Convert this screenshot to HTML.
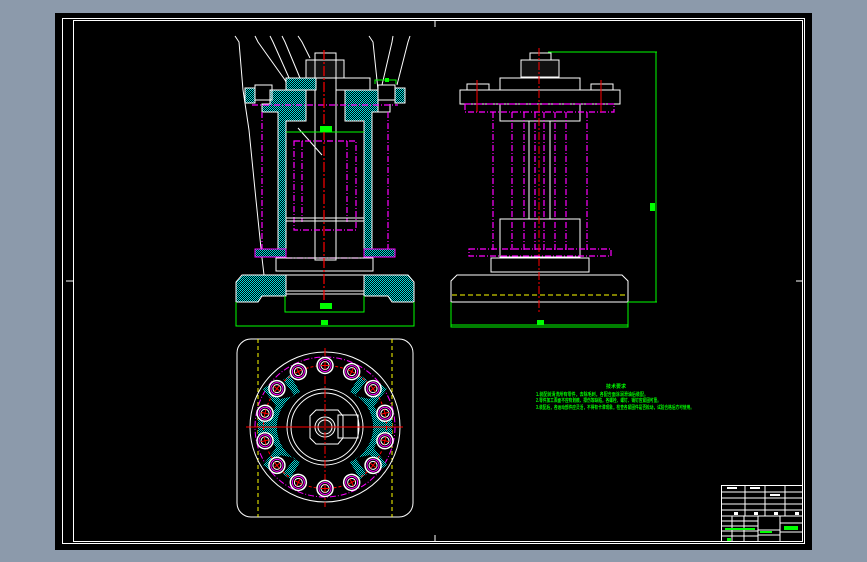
<!DOCTYPE html>
<html><head><meta charset="utf-8"><style>
html,body{margin:0;padding:0;background:#8c9aab;}
svg{display:block}
</style></head><body>
<svg width="867" height="562" viewBox="0 0 867 562" xmlns="http://www.w3.org/2000/svg">
<defs>
<pattern id="h" width="2" height="2" patternUnits="userSpaceOnUse">
<rect width="2" height="2" fill="#000"/><rect width="1" height="1" fill="#00e0e0"/><rect x="1" y="1" width="1" height="1" fill="#00e0e0"/>
</pattern>
<g id="hole"><circle r="8" fill="#000" stroke="#fff" stroke-width="1.5"/><circle r="6" fill="none" stroke="#f0f"/><circle r="4" fill="none" stroke="#fff"/><path d="M-4,0H4M0,-4V4" stroke="#f00"/></g>
</defs>
<rect x="0" y="0" width="867" height="562" fill="#8c9aab"/>
<rect x="55" y="13" width="757" height="537" fill="#000"/>
<rect x="62.5" y="18.5" width="742" height="525" fill="none" stroke="#fff" stroke-width="1"/>
<rect x="73.5" y="20.5" width="729" height="521" fill="none" stroke="#fff" stroke-width="1"/>
<g stroke="#fff" stroke-width="1">
<line x1="435" y1="20" x2="435" y2="27"/><line x1="435" y1="535" x2="435" y2="541"/>
<line x1="66" y1="281" x2="73" y2="281"/><line x1="796" y1="281" x2="802" y2="281"/>
</g>

<!-- LEFT SECTION VIEW -->
<g fill="none" stroke="#fff" stroke-width="1">
<polyline points="235,36 239,42 243,90 249,130 256,200 262,258 264,275"/>
<polyline points="255,36 258,42 285,80 300,110"/>
<polyline points="270,36 273,42 290,80 300,95"/>
<polyline points="282,36 285,42 300,78"/>
<polyline points="298,36 302,42 310,58"/>
<polyline points="369,36 373,42 378,90"/>
<polyline points="393,36 392,42 382,85"/>
<polyline points="410,36 408,42 397,85"/>
<line x1="298" y1="128" x2="322" y2="155"/>
</g>
<rect x="315" y="53" width="21" height="7" fill="#000" stroke="#fff"/>
<rect x="306" y="60" width="38" height="18" fill="#111" stroke="#fff"/>
<rect x="315" y="60" width="21" height="200" fill="none" stroke="#fff"/>
<rect x="286" y="78" width="30" height="12" fill="url(#h)" stroke="#fff"/>
<rect x="336" y="78" width="34" height="12" fill="none" stroke="#fff"/>
<path d="M270,90 H306 V121 H286 V258 H278 V112 H262 V104 H270 Z" fill="url(#h)" stroke="#fff"/>
<path d="M345,90 H378 V112 H390 V104 V112 H372 V258 H364 V121 H345 Z" fill="url(#h)" stroke="#fff"/>
<rect x="245" y="88" width="10" height="15" fill="url(#h)" stroke="#fff"/>
<rect x="255" y="85" width="17" height="15" fill="none" stroke="#fff"/>
<rect x="378" y="85" width="17" height="15" fill="none" stroke="#fff"/>
<rect x="395" y="88" width="10" height="15" fill="url(#h)" stroke="#fff"/>
<path d="M375,84 V80 H396 V84" fill="none" stroke="#0f0"/>
<rect x="385" y="78" width="4" height="4" fill="#0f0"/>
<g fill="none" stroke="#f0f" stroke-width="1.2" stroke-dasharray="6,2,1,2">
<line x1="252" y1="105" x2="398" y2="105"/>
<line x1="262" y1="112" x2="262" y2="250"/>
<line x1="388" y1="112" x2="388" y2="250"/>
<rect x="294" y="141" width="62" height="89"/>
<line x1="302" y1="141" x2="302" y2="222"/>
<line x1="347" y1="141" x2="347" y2="222"/>
<line x1="286" y1="258" x2="364" y2="258"/>
</g>
<line x1="286" y1="132" x2="364" y2="132" stroke="#0f0"/>
<rect x="255" y="249" width="31" height="8" fill="url(#h)" stroke="#f0f"/>
<rect x="364" y="249" width="31" height="8" fill="url(#h)" stroke="#f0f"/>
<rect x="286" y="218" width="78" height="3" fill="none" stroke="#fff"/>
<rect x="276" y="258" width="97" height="13" fill="none" stroke="#fff"/>
<path d="M242,275 H286 V296 H262 L258,302 H236 V282 Z" fill="url(#h)" stroke="#fff"/>
<path d="M364,275 H408 L414,282 V302 H392 L388,296 H364 Z" fill="url(#h)" stroke="#fff"/>
<line x1="286" y1="275" x2="364" y2="275" stroke="#fff"/>
<line x1="286" y1="291" x2="364" y2="291" stroke="#fff"/>
<line x1="286" y1="294" x2="364" y2="294" stroke="#fff"/>
<line x1="324" y1="50" x2="324" y2="302" stroke="#f00" stroke-width="1.2" stroke-dasharray="10,2,2,2"/>
<g stroke="#0f0" fill="none">
<path d="M285,296 V312 H364 V296"/>
<path d="M236,302 V326 H414 V302"/>
</g>
<rect x="320" y="303" width="12" height="6" fill="#0f0"/>
<rect x="321" y="320" width="7" height="5" fill="#0f0"/>
<rect x="320" y="126" width="12" height="6" fill="#0f0"/>

<!-- RIGHT VIEW -->
<g fill="none" stroke="#fff" stroke-width="1">
<rect x="530" y="53" width="21" height="7"/>
<rect x="521" y="60" width="38" height="17" fill="#111"/>
<rect x="500" y="78" width="80" height="12"/>
<rect x="460" y="90" width="160" height="14"/>
<rect x="467" y="84" width="22" height="6"/>
<rect x="591" y="84" width="22" height="6"/>
<rect x="500" y="104" width="80" height="17"/>
<rect x="529" y="121" width="21" height="98"/>
<rect x="500" y="219" width="80" height="38"/>
<rect x="491" y="258" width="98" height="14"/>
<path d="M451,302 V281 L457,275 H622 L628,281 V302 Z"/>
</g>
<g fill="none" stroke="#f0f" stroke-width="1.2" stroke-dasharray="6,2,1,2">
<rect x="465" y="104" width="149" height="8"/>
<line x1="493" y1="112" x2="493" y2="250"/>
<line x1="587" y1="112" x2="587" y2="250"/>
<line x1="512" y1="112" x2="512" y2="250"/>
<line x1="524" y1="112" x2="524" y2="250"/>
<line x1="535" y1="112" x2="535" y2="250"/>
<line x1="544" y1="112" x2="544" y2="250"/>
<line x1="555" y1="112" x2="555" y2="250"/>
<line x1="566" y1="112" x2="566" y2="250"/>
<rect x="469" y="249" width="142" height="7"/>
</g>
<line x1="452" y1="295" x2="627" y2="295" stroke="#ff0" stroke-dasharray="5,3"/>
<line x1="539" y1="48" x2="539" y2="312" stroke="#f00" stroke-dasharray="8,2,2,2"/>
<line x1="477" y1="80" x2="477" y2="112" stroke="#f00"/>
<line x1="601" y1="80" x2="601" y2="112" stroke="#f00"/>
<g stroke="#0f0" fill="none">
<path d="M548,52 H657 M656,52 V302 M628,302 H657"/>
<path d="M451,302 V327 H628 V302 M451,325 H628"/>
</g>
<rect x="650" y="203" width="5" height="8" fill="#0f0"/>
<rect x="537" y="320" width="7" height="5" fill="#0f0"/>

<!-- PLAN VIEW -->
<rect x="237" y="339" width="176" height="178" rx="14" fill="none" stroke="#fff"/>
<line x1="258" y1="339" x2="258" y2="517" stroke="#ff0" stroke-dasharray="4,3"/>
<line x1="392" y1="339" x2="392" y2="517" stroke="#ff0" stroke-dasharray="4,3"/>
<circle cx="325" cy="427" r="75" fill="none" stroke="#fff"/>
<circle cx="325" cy="427" r="70" fill="none" stroke="#f0f" stroke-dasharray="6,2,1,2"/>
<!-- spider: left and right cyan sectors with arms -->
<g fill="url(#h)">
<path d="M295,396 L283,380 L290,375 L300,392 A38,38 0 0 0 300,462 L290,479 L283,474 L295,458 L280,455 L270,470 L263,465 L276,448 L272,440 L258,440 L258,414 L272,414 L276,406 L263,389 L270,384 L280,399 Z"/>
<path d="M355,396 L367,380 L360,375 L350,392 A38,38 0 0 1 350,462 L360,479 L367,474 L355,458 L370,455 L380,470 L387,465 L374,448 L378,440 L392,440 L392,414 L378,414 L374,406 L387,389 L380,384 L370,399 Z"/>
</g>
<circle cx="325" cy="427" r="38" fill="#000" stroke="#fff"/>
<circle cx="325" cy="427" r="34" fill="none" stroke="#fff"/>
<path d="M310,416 L316,410 H338 L343,416 V438 L338,444 H316 L310,438 Z" fill="none" stroke="#fff"/>
<rect x="338" y="415" width="20" height="23" fill="none" stroke="#fff"/>
<circle cx="325" cy="427" r="10" fill="#111" stroke="#fff"/>
<circle cx="325" cy="427" r="7" fill="none" stroke="#fff"/>
<line x1="246" y1="427" x2="403" y2="427" stroke="#f00"/>
<line x1="325" y1="348" x2="325" y2="507" stroke="#f00" stroke-dasharray="8,2,2,2"/>
<circle cx="325" cy="427" r="61.5" fill="none" stroke="#f00" stroke-dasharray="3,2"/>
<g transform="translate(325,427)">
<use href="#hole" transform="rotate(0) translate(0,-61.5)"/>
<use href="#hole" transform="rotate(25.7) translate(0,-61.5)"/>
<use href="#hole" transform="rotate(51.4) translate(0,-61.5)"/>
<use href="#hole" transform="rotate(77.1) translate(0,-61.5)"/>
<use href="#hole" transform="rotate(102.9) translate(0,-61.5)"/>
<use href="#hole" transform="rotate(128.6) translate(0,-61.5)"/>
<use href="#hole" transform="rotate(154.3) translate(0,-61.5)"/>
<use href="#hole" transform="rotate(180) translate(0,-61.5)"/>
<use href="#hole" transform="rotate(205.7) translate(0,-61.5)"/>
<use href="#hole" transform="rotate(231.4) translate(0,-61.5)"/>
<use href="#hole" transform="rotate(257.1) translate(0,-61.5)"/>
<use href="#hole" transform="rotate(282.9) translate(0,-61.5)"/>
<use href="#hole" transform="rotate(308.6) translate(0,-61.5)"/>
<use href="#hole" transform="rotate(334.3) translate(0,-61.5)"/>
</g>

<g fill="#0f0" font-family="Liberation Sans, Noto Sans CJK SC, sans-serif" font-size="5" font-weight="bold">
<text x="606" y="388">技术要求</text>
<text x="536" y="396" textLength="112" lengthAdjust="spacingAndGlyphs">1.装配前清洗所有零件，去除毛刺，各配合面涂润滑油后装配。</text>
<text x="536" y="402" textLength="125" lengthAdjust="spacingAndGlyphs">2.零件加工表面不应有划痕、擦伤等缺陷，各螺栓、螺钉、销钉应紧固可靠。</text>
<text x="536" y="409" textLength="158" lengthAdjust="spacingAndGlyphs">3.装配后，各运动部件应灵活，不得有卡滞现象，检查各紧固件是否松动，试验合格后方可使用。</text>
</g>

<g stroke="#fff" fill="none" stroke-width="1">
<rect x="721.5" y="485.5" width="81" height="56"/>
<line x1="721" y1="516" x2="803" y2="516"/>
<line x1="758" y1="516" x2="758" y2="541"/>
<line x1="780" y1="516" x2="780" y2="541"/>
<line x1="721" y1="521" x2="758" y2="521"/>
<line x1="721" y1="526" x2="758" y2="526"/>
<line x1="721" y1="531" x2="758" y2="531"/>
<line x1="721" y1="536" x2="758" y2="536"/>
<line x1="780" y1="523" x2="803" y2="523"/>
<line x1="780" y1="532" x2="803" y2="532"/>
<line x1="758" y1="530" x2="780" y2="530"/>
<line x1="758" y1="535" x2="780" y2="535"/>
<line x1="732" y1="516" x2="732" y2="541"/>
<line x1="744" y1="516" x2="744" y2="541"/>
<line x1="745" y1="485" x2="745" y2="516"/>
<line x1="765" y1="485" x2="765" y2="516"/>
<line x1="785" y1="485" x2="785" y2="516"/>
<line x1="721" y1="492" x2="803" y2="492"/>
<line x1="721" y1="498" x2="803" y2="498"/>
<line x1="721" y1="504" x2="803" y2="504"/>
<line x1="721" y1="510" x2="803" y2="510"/>
</g>
<g fill="#fff">
<rect x="727" y="487" width="10" height="2"/><rect x="750" y="487" width="10" height="2"/><rect x="770" y="494" width="10" height="2"/>
<rect x="734" y="512" width="4" height="3"/><rect x="754" y="512" width="4" height="3"/><rect x="774" y="512" width="4" height="3"/><rect x="795" y="512" width="4" height="3"/>
</g>
<g fill="#0f0">
<rect x="725" y="528" width="30" height="2"/>
<rect x="784" y="526" width="14" height="4"/>
<rect x="760" y="531" width="12" height="2"/>
<rect x="727" y="538" width="4" height="3"/>
</g>
</svg>
</body></html>
